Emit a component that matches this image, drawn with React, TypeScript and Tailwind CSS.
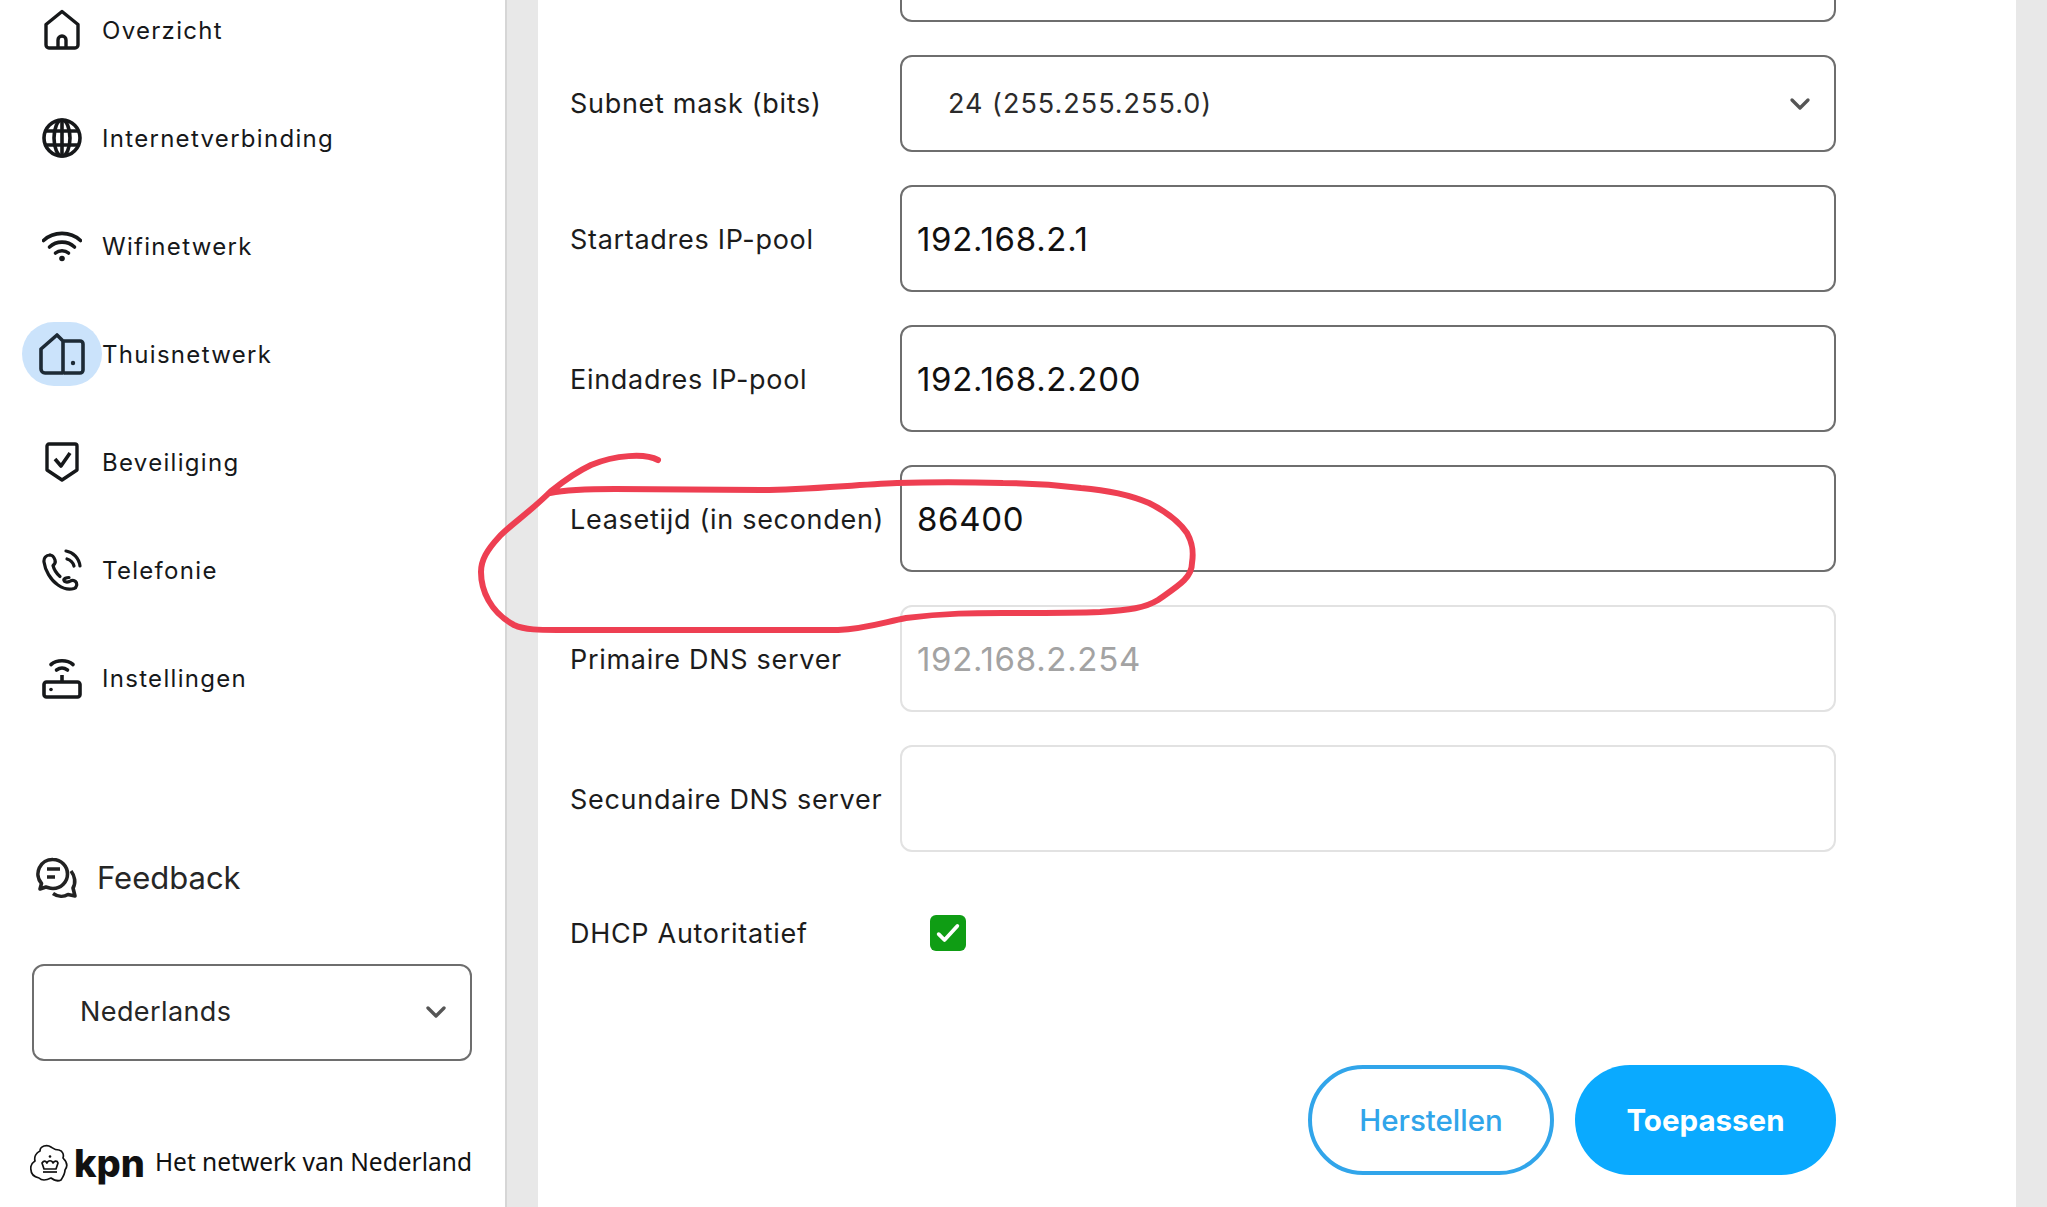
import type { ReactNode } from 'react'
import { ChevronDown } from 'lucide-react'

function HomeIcon() {
  return (
    <svg viewBox="0 0 40 42" className="h-[42px] w-10" fill="none" stroke="#16181a" strokeWidth="3.4" strokeLinejoin="round">
      <path d="M4 15.500 20 2.500 36 15.500V36a3 3 0 0 1-3 3H7a3 3 0 0 1-3-3Z" />
      <path d="M16 39V31a4 4 0 0 1 8 0v8" />
    </svg>
  )
}

function GlobeIcon() {
  return (
    <svg viewBox="0 0 40 40" className="h-10 w-10" fill="none" stroke="#16181a" strokeWidth="3.6">
      <circle cx="20" cy="20" r="18" />
      <ellipse cx="20" cy="20" rx="8" ry="18" />
      <path d="M20 2v36M4 13h32M4 27h32" />
    </svg>
  )
}

function WifiIcon() {
  return (
    <svg viewBox="0 0 40 32" className="h-8 w-10" fill="none" stroke="#16181a" strokeWidth="3.6" strokeLinecap="round">
      <path d="M1.500 10.500C11.500 1 28.500 1 38.500 10.500" />
      <path d="M7.500 17C14.500 10.500 25.500 10.500 32.500 17" />
      <path d="M13.500 23C17 20 23 20 26.500 23" />
      <circle cx="20" cy="28.500" r="2.800" fill="#16181a" stroke="none" />
    </svg>
  )
}

function HomeNetworkIcon() {
  return (
    <svg viewBox="0 0 46 42" className="h-[42px] w-[46px]" fill="none" stroke="#1d2a35" strokeWidth="3.6" strokeLinejoin="round">
      <path d="M2 16 18 2l6 6v32H6a4 4 0 0 1-4-4Z" />
      <path d="M25 8h16a3 3 0 0 1 3 3v26a3 3 0 0 1-3 3H25" />
      <circle cx="34" cy="30" r="2.200" fill="#1d2a35" stroke="none" />
    </svg>
  )
}

function ShieldIcon() {
  return (
    <svg viewBox="0 0 34 40" className="h-10 w-[34px]" fill="none" stroke="#16181a" strokeWidth="3.4" strokeLinejoin="round">
      <path d="M4 2h26a2 2 0 0 1 2 2v24L17 38 2 28V4a2 2 0 0 1 2-2Z" />
      <path d="M10 17l6 7 9-13" strokeWidth="3.600" />
    </svg>
  )
}

function PhoneIcon() {
  return (
    <svg viewBox="0 0 40 42" className="h-[42px] w-10" fill="none" stroke="#16181a" strokeWidth="3.2" strokeLinecap="round" strokeLinejoin="round">
      <path d="M8 6C4 6 1.500 9 2 13c1 8 6.500 18 14 23 5 3.500 11 5 16 3.500 3-1 3.500-5 1.500-7-1.500-1.500-3.500-1.500-6 0-2.500 1-5 .5-5.500-1-1-2 3-3 5-3" />
      <path d="M8 6c3 0 4 2 5 5 .8 2.500 0 4-2 5.500 1 4 3.500 8 7 11" />
      <path d="M24 2c7 1 13 7 14 15" />
      <path d="M25 10c3.500 1 6 3.500 7 7" />
    </svg>
  )
}

function RouterIcon() {
  return (
    <svg viewBox="0 0 40 42" className="h-[42px] w-10" fill="none" stroke="#16181a" strokeWidth="3.6" strokeLinecap="round">
      <path d="M9 7.500c6-5 16-5 22 0" />
      <path d="M14.500 13c3.500-2.500 7.500-2.500 11 0" />
      <path d="M20 18v7" strokeLinecap="butt" />
      <rect x="2" y="25" width="36" height="15" rx="2.500" />
      <circle cx="9" cy="32.500" r="1.800" fill="#16181a" stroke="none" />
    </svg>
  )
}

function FeedbackIcon() {
  return (
    <svg viewBox="0 0 42 42" className="h-[42px] w-[42px]" fill="none" stroke="#222" strokeWidth="3.6" strokeLinejoin="round">
      <path d="M17 2.500a14.500 14.500 0 0 1 0 29c-3 0-5-1-7-1.500l-6 2 1.500-5.500A14.500 14.500 0 0 1 17 2.500Z" />
      <path d="M35 14c4 5 5 12 2 17l2 8-7-1.500c-4 2.500-10 2.500-15-1" />
      <path d="M11 12h13M11 20h8" strokeWidth="3.400" />
    </svg>
  )
}

function CrownLogo() {
  return (
    <svg viewBox="0 0 40 40" className="h-10 w-10 shrink-0" fill="none" stroke="#111" strokeWidth="1.700" strokeLinejoin="round">
      <path d="M10 8c0-5 7-7 11-4 3 2 4 3 8 3 4 1 5 5 4 8 3 3 6 7 2 12 0 4-2 7-4 10-4 2-7 0-10-2-4 2-9 3-12 0-4-1-8-3-8-8-1-4 1-7 4-9-1-4 1-8 5-10Z" />
      <path d="M12 20c2-3 4-2 5 0 1-3 5-3 6 0 1-2 4-3 5 0l-2 6H14Z" />
      <path d="M13 29h14" />
      <circle cx="20" cy="13.500" r="1.300" fill="#111" stroke="none" />
    </svg>
  )
}

const navItems: { label: string; icon: ReactNode; active?: boolean }[] = [
  { label: 'Overzicht', icon: <HomeIcon /> },
  { label: 'Internetverbinding', icon: <GlobeIcon /> },
  { label: 'Wifinetwerk', icon: <WifiIcon /> },
  { label: 'Thuisnetwerk', icon: <HomeNetworkIcon />, active: true },
  { label: 'Beveiliging', icon: <ShieldIcon /> },
  { label: 'Telefonie', icon: <PhoneIcon /> },
  { label: 'Instellingen', icon: <RouterIcon /> },
]

function NavItem({ label, icon, active }: { label: string; icon: ReactNode; active?: boolean }) {
  return (
    <div className="flex h-[108px] items-center pl-[22px]">
      <div className={`flex h-16 w-20 items-center justify-center rounded-[32px] ${active ? 'bg-[#cbe3fb]' : ''}`}>
        {icon}
      </div>
      <span className="pt-[2px] text-[24px] tracking-[1.3px] text-[#16181a]">{label}</span>
    </div>
  )
}

function Field({ label, value, disabled }: { label: string; value?: string; disabled?: boolean }) {
  return (
    <div className="flex items-center">
      <label className="w-[330px] pt-[3px] text-[27px] tracking-[0.7px] text-[#1c1c1c]">{label}</label>
      <div
        className={`flex h-[107px] w-[936px] items-center rounded-xl border-2 px-[15px] pt-[3px] text-[33px] tracking-[0.7px] ${
          disabled ? 'border-[#e2e2e2] text-[#a3a3a3]' : 'border-[#6e6e6e] text-[#111]'
        }`}
      >
        {value}
      </div>
    </div>
  )
}

export default function App() {
  return (
    <div className="relative flex h-[1207px] overflow-hidden bg-[#e8e8e8] font-['Inter',sans-serif]">
      <aside className="h-full w-[507px] shrink-0 border-r-2 border-[#d6d6d6] bg-white">
        <nav className="mt-[-24px]">
          {navItems.map((item) => (
            <NavItem key={item.label} {...item} />
          ))}
        </nav>
        <div className="mt-[123px] flex items-center gap-[19px] pl-[36px]">
          <FeedbackIcon />
          <span className="text-[31px] text-[#262626]">Feedback</span>
        </div>
        <div className="mx-[32px] mt-[62px] flex h-[97px] w-[440px] items-center justify-between rounded-xl border-2 border-[#6e6e6e] pl-[46px] pr-[18px] text-[27px] tracking-[0.4px] text-[#262626]">
          Nederlands
          <ChevronDown size={32} strokeWidth={2.5} className="text-[#555]" />
        </div>
        <div className="ml-[30px] mt-[82px] flex items-center">
          <CrownLogo />
          <span className="ml-[4px] text-[38px] font-extrabold leading-none text-[#111]">kpn</span>
          <span className="ml-[10px] whitespace-nowrap font-['Noto_Sans',sans-serif] text-[24.5px] text-[#111]">Het netwerk van Nederland</span>
        </div>
      </aside>

      <div className="w-[31px] shrink-0" />

      <main className="h-full w-[1478px] shrink-0 bg-white pl-[32px]">
        <div className="mt-[-85px] flex flex-col gap-[33px]">
          <Field label="" />
          <div className="flex items-center">
            <label className="w-[330px] pt-[2px] text-[27px] tracking-[0.7px] text-[#1c1c1c]">Subnet mask (bits)</label>
            <div className="flex h-[97px] w-[936px] items-center justify-between rounded-xl border-2 border-[#6e6e6e] pl-[46px] pr-[18px] text-[27px] tracking-[1px] text-[#2b2b2b]">
              <span className="pt-[2px]">24 (255.255.255.0)</span>
              <ChevronDown size={32} strokeWidth={2.5} className="text-[#555]" />
            </div>
          </div>
          <Field label="Startadres IP-pool" value="192.168.2.1" />
          <Field label="Eindadres IP-pool" value="192.168.2.200" />
          <Field label="Leasetijd (in seconden)" value="86400" />
          <Field label="Primaire DNS server" value="192.168.2.254" disabled />
          <Field label="Secundaire DNS server" disabled />
        </div>
        <div className="mt-[63px] flex h-9 items-center">
          <label className="w-[360px] pt-[3px] text-[27px] tracking-[0.7px] text-[#1c1c1c]">DHCP Autoritatief</label>
          <div className="flex h-9 w-9 items-center justify-center rounded-md bg-[#0f9d14]">
            <svg viewBox="0 0 24 24" className="h-7 w-7" fill="none" stroke="#fff" strokeWidth="3.200" strokeLinecap="round" strokeLinejoin="round">
              <path d="M4 13l5 5L20 6" />
            </svg>
          </div>
        </div>
        <div className="mt-[114px] flex w-[1266px] justify-end gap-[21px]">
          <button className="h-[110px] w-[246px] rounded-[55px] border-4 border-[#31a5ea] bg-white text-[29.500px] font-medium text-[#31a5ea]">
            Herstellen
          </button>
          <button className="h-[110px] w-[261px] rounded-[55px] bg-[#0aaaff] text-[29.500px] font-bold text-white">
            Toepassen
          </button>
        </div>
      </main>

      {/* marker annotation drawn over the page */}
      <svg className="pointer-events-none absolute left-0 top-0 h-[1207px] w-[2047px]" viewBox="0 0 2047 1207" fill="none">
        <path
          d="M658 460C645 453 615 455 591 465C572 474 560 484 550 492C530 512 510 525 499 537C487 550 481 560 481 572C481 590 490 612 514 625C525 630 540 630 557 630L838 630C865 629 885 622 906 618C945 613 975 613 1003 613C1040 613 1075 613 1100 612C1130 610 1145 608 1158 600C1178 586 1192 578 1192 563C1194 550 1192 542 1187 533C1178 520 1165 511 1149 503C1130 495 1105 490 1081 488C1050 484 1030 483 1003 483C965 482 930 482 897 483C850 485 805 490 761 490C710 490 660 489 615 489C590 489 565 490 550 493"
          stroke="#ee3f52"
          strokeWidth="6"
          strokeLinecap="round"
          strokeLinejoin="round"
        />
      </svg>
    </div>
  )
}
